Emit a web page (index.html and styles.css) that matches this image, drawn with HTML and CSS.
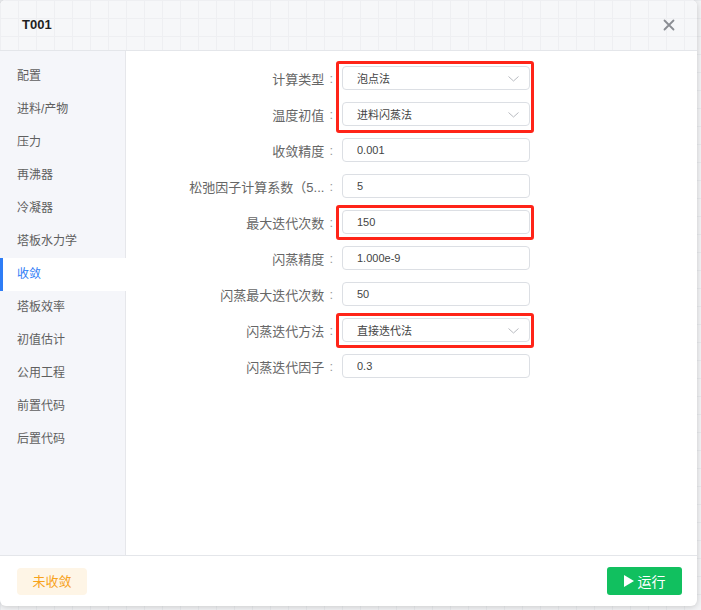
FILE: index.html
```html
<!DOCTYPE html>
<html lang="zh-CN">
<head>
    <meta charset="UTF-8">
    <meta name="viewport" content="width=device-width, initial-scale=1.0">
    <title>T001</title>
    <link rel="stylesheet" href="styles.css">
</head>
<body>
    <div class="modal">
        <div class="modal-header">
            <span class="modal-title">T001</span>
            <button class="close" aria-label="关闭">
                <svg width="12" height="12" viewBox="0 0 12 12"><path d="M1.5 1.5 L10.5 10.5 M10.5 1.5 L1.5 10.5" stroke="#8a8d93" stroke-width="1.8" stroke-linecap="round"/></svg>
            </button>
        </div>

        <div class="modal-body">
            <ul class="side-nav">
                <li>配置</li>
                <li>进料/产物</li>
                <li>压力</li>
                <li>再沸器</li>
                <li>冷凝器</li>
                <li>塔板水力学</li>
                <li class="active">收敛</li>
                <li>塔板效率</li>
                <li>初值估计</li>
                <li>公用工程</li>
                <li>前置代码</li>
                <li>后置代码</li>
            </ul>

            <div class="panel">
                <div class="form">
                    <div class="form-row">
                        <label><span class="text">计算类型</span><span class="colon">:</span></label>
                        <div class="select"><span>泡点法</span><svg class="arrow" width="11" height="6" viewBox="0 0 11 6"><path d="M0.5 0.5 L5.5 5 L10.5 0.5" fill="none" stroke="#b8bbc0" stroke-width="1"/></svg></div>
                    </div>
                    <div class="form-row">
                        <label><span class="text">温度初值</span><span class="colon">:</span></label>
                        <div class="select"><span>进料闪蒸法</span><svg class="arrow" width="11" height="6" viewBox="0 0 11 6"><path d="M0.5 0.5 L5.5 5 L10.5 0.5" fill="none" stroke="#b8bbc0" stroke-width="1"/></svg></div>
                    </div>
                    <div class="form-row">
                        <label><span class="text">收敛精度</span><span class="colon">:</span></label>
                        <input class="input" type="text" value="0.001">
                    </div>
                    <div class="form-row">
                        <label><span class="text">松弛因子计算系数（5...</span><span class="colon">:</span></label>
                        <input class="input" type="text" value="5">
                    </div>
                    <div class="form-row">
                        <label><span class="text">最大迭代次数</span><span class="colon">:</span></label>
                        <input class="input" type="text" value="150">
                    </div>
                    <div class="form-row">
                        <label><span class="text">闪蒸精度</span><span class="colon">:</span></label>
                        <input class="input" type="text" value="1.000e-9">
                    </div>
                    <div class="form-row">
                        <label><span class="text">闪蒸最大迭代次数</span><span class="colon">:</span></label>
                        <input class="input" type="text" value="50">
                    </div>
                    <div class="form-row">
                        <label><span class="text">闪蒸迭代方法</span><span class="colon">:</span></label>
                        <div class="select"><span>直接迭代法</span><svg class="arrow" width="11" height="6" viewBox="0 0 11 6"><path d="M0.5 0.5 L5.5 5 L10.5 0.5" fill="none" stroke="#b8bbc0" stroke-width="1"/></svg></div>
                    </div>
                    <div class="form-row">
                        <label><span class="text">闪蒸迭代因子</span><span class="colon">:</span></label>
                        <input class="input" type="text" value="0.3">
                    </div>
                </div>

                <!-- annotation boxes -->
                <div class="mark mark-type"></div>
                <div class="mark mark-iter"></div>
                <div class="mark mark-flash"></div>
            </div>
        </div>

        <div class="modal-footer">
            <span class="tag-warn">未收敛</span>
            <button class="btn-run">
                <svg width="10" height="12" viewBox="0 0 10 12"><path d="M0 0 L10 6 L0 12 Z" fill="#fff"/></svg>
                运行
            </button>
        </div>
    </div>
</body>
</html>
```

FILE: styles.css
```css
* {
    box-sizing: border-box;
}
body {
    margin: 0;
    font-family: 'Liberation Sans', 'Noto Sans CJK SC', sans-serif;
    background-color: #f3f4f6;
    background-image:
        linear-gradient(#e9ebee 1px, transparent 1px),
        linear-gradient(90deg, #e9ebee 1px, transparent 1px);
    background-size: 18px 18px;
    height: 610px;
    overflow: hidden;
}
.modal {
    width: 697px;
    height: 606px;
    background: #fff;
    border-radius: 6px;
    box-shadow: 0 1px 6px rgba(0, 0, 0, 0.18);
    display: flex;
    flex-direction: column;
    overflow: hidden;
}
.modal-header {
    height: 51px;
    flex-shrink: 0;
    display: flex;
    align-items: center;
    justify-content: space-between;
    padding: 0 22px 1px 22px;
    border-bottom: 1px solid #e4e6ea;
    background-color: #f6f7f9;
    background-image:
        linear-gradient(#eeeff2 1px, transparent 1px),
        linear-gradient(90deg, #eeeff2 1px, transparent 1px);
    background-size: 18px 18px;
}
.modal-title {
    font-size: 13px;
    font-weight: bold;
    color: #1f1f1f;
}
.close {
    background: none;
    border: none;
    padding: 0;
    width: 12px;
    height: 12px;
    cursor: pointer;
    display: flex;
}
.modal-body {
    flex: 1;
    display: flex;
    min-height: 0;
}
.side-nav {
    list-style: none;
    margin: 0;
    padding: 9px 0 0;
    width: 126px;
    flex-shrink: 0;
    background: #f5f6fa;
    border-right: 1px solid #e6e7eb;
}
.side-nav li {
    height: 33px;
    line-height: 33px;
    padding-left: 17px;
    font-size: 12px;
    color: #5f5f5f;
    cursor: pointer;
}
.side-nav li.active {
    background: #fff;
    color: #2f7df6;
    box-shadow: inset 3px 0 0 #2f7df6;
    margin-right: -1px;
}
.panel {
    flex: 1;
    position: relative;
    padding-top: 15px;
}
.form-row {
    display: grid;
    grid-template-columns: 209px 188px;
    column-gap: 7px;
    height: 24px;
    margin-bottom: 12px;
}
.form-row label {
    display: flex;
    justify-content: flex-end;
    align-items: center;
    font-size: 13px;
    color: #666;
    white-space: nowrap;
}
.form-row .colon {
    color: #999;
    margin: 0 2px 0 5px;
}
.input,
.select {
    height: 24px;
    border: 1px solid #dcdfe4;
    border-radius: 4px;
    background: #fff;
    font-family: 'Liberation Sans', 'Noto Sans CJK SC', sans-serif;
    font-size: 11px;
    color: #444;
    padding: 0 0 0 14px;
}
.input {
    width: 188px;
    outline: none;
}
.select {
    position: relative;
    display: flex;
    align-items: center;
}
.select .arrow {
    position: absolute;
    right: 10px;
    top: 9px;
}
.mark {
    position: absolute;
    left: 210px;
    width: 198px;
    border: 3px solid #ff2418;
    border-radius: 3px;
}
.mark-type {
    top: 10px;
    height: 72px;
}
.mark-iter {
    top: 154px;
    height: 35px;
}
.mark-flash {
    top: 262px;
    height: 35px;
}
.modal-footer {
    height: 51px;
    flex-shrink: 0;
    border-top: 1px solid #e4e6ea;
    display: flex;
    align-items: center;
    justify-content: space-between;
    padding: 0 15px 0 17px;
}
.tag-warn {
    width: 70px;
    height: 27px;
    line-height: 27px;
    text-align: center;
    background: #fef5e6;
    color: #f7a21b;
    font-size: 13px;
    border-radius: 4px;
}
.btn-run {
    width: 75px;
    height: 28px;
    background: #11c05f;
    color: #fff;
    border: none;
    border-radius: 3px;
    font-family: 'Liberation Sans', 'Noto Sans CJK SC', sans-serif;
    font-size: 14px;
    display: flex;
    align-items: center;
    justify-content: center;
    gap: 4px;
    cursor: pointer;
}
```
